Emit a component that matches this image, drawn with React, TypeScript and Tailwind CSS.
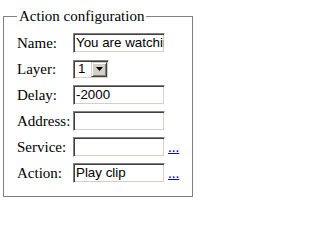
import React from "react";

const inputCls =
  "box-border h-[20px] w-[92px] border border-t-[#808080] border-l-[#808080] border-b-white border-r-white bg-white px-[1px] text-[13.33px] leading-[16px] text-black shadow-[inset_1px_1px_0_#404040,inset_-1px_-1px_0_#d4d0c8] [font-family:'Liberation_Sans',Arial,sans-serif]";

function Row({ label, children }: { label: string; children: React.ReactNode }) {
  return (
    <div className="flex h-[26px] items-center">
      <div className="w-[56px] whitespace-nowrap text-[15px] leading-[18px]">{label}</div>
      <div className="flex items-center">{children}</div>
    </div>
  );
}

function Field({ value }: { value?: string }) {
  return (
    <div className={inputCls + " flex items-center overflow-hidden whitespace-nowrap"}>
      <span className="pl-[1px]">{value ?? ""}</span>
    </div>
  );
}

function Link() {
  return (
    <a href="#" className="ml-[3px] text-[15px] leading-[18px] text-[#0000ff] underline">
      ...
    </a>
  );
}

export default function App() {
  return (
    <div className="h-[204px] w-[200px] bg-white text-black [font-family:'Liberation_Serif','Times_New_Roman',serif]">
      <fieldset className="ml-[3px] mt-[7px] w-[190px] border border-[#808080] pb-[10px] pl-[13px] pr-[12px] pt-[5px]">
        <legend className="px-[2px] text-[15px] leading-[18px]">Action configuration</legend>
        <Row label="Name:">
          <Field value="You are watching" />
        </Row>
        <Row label="Layer:">
          <div className="box-border flex h-[19px] w-[36px] items-stretch border border-t-[#808080] border-l-[#808080] border-b-white border-r-white bg-white shadow-[inset_1px_1px_0_#404040,inset_-1px_-1px_0_#d4d0c8] p-[1px]">
            <div className="flex flex-1 items-center pl-[3px] text-[13.33px] leading-[16px] [font-family:'Liberation_Sans',Arial,sans-serif]">
              1
            </div>
            <div className="box-border flex w-[16px] items-center justify-center border border-t-[#d4d0c8] border-l-[#d4d0c8] border-b-[#404040] border-r-[#404040] bg-[#d4d0c8] shadow-[inset_1px_1px_0_#ffffff,inset_-1px_-1px_0_#808080]">
              <svg width="7" height="4" viewBox="0 0 7 4">
                <path d="M0 0h7L3.5 4z" fill="#000" />
              </svg>
            </div>
          </div>
        </Row>
        <Row label="Delay:">
          <Field value="-2000" />
        </Row>
        <Row label="Address:">
          <Field />
        </Row>
        <Row label="Service:">
          <Field />
          <Link />
        </Row>
        <Row label="Action:">
          <Field value="Play clip" />
          <Link />
        </Row>
      </fieldset>
    </div>
  );
}
